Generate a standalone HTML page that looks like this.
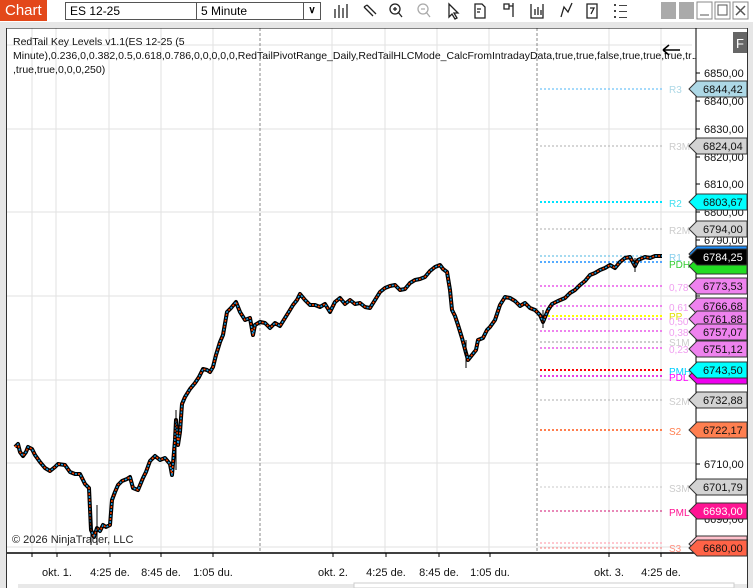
<!DOCTYPE html>
<html><head><meta charset="utf-8">
<style>
*{margin:0;padding:0;box-sizing:border-box}
body{width:753px;height:588px;overflow:hidden;background:#fff;font-family:"Liberation Sans",sans-serif;position:relative}
.tb{position:absolute;left:0;top:0;width:753px;height:22px;background:#fff}
.chart{position:absolute;left:0;top:0;width:47px;height:21px;background:#e3481a;color:#fff;font-size:15px;line-height:21px;padding-left:5px}
.combo{position:absolute;top:2px;height:18px;border:1px solid #555;background:#fff;font-size:12px;line-height:16px;padding-left:4px}
.combo span{position:absolute;right:0;top:0;width:17px;height:16px;border-left:1px solid #555;text-align:center;font-size:10px;font-weight:bold}
.strip{position:absolute;left:0;top:22px;width:753px;height:6px;background:#e6e6e6}
</style></head><body>
<div class="tb"></div>
<div class="chart">Chart</div>
<div class="combo" style="left:65px;width:152px">ES 12-25<span>∨</span></div>
<div class="combo" style="left:196px;width:125px">5 Minute<span>∨</span></div>
<svg style="position:absolute;left:0;top:0" width="753" height="22">
<g stroke="#222" fill="none" stroke-width="1.3">
<path d="M335 9v9M339 5v13M343 8v10M347 4v14"/>
<path d="M364 7l9 9M367 5l9 9M364 7l3-2"/>
<circle cx="395" cy="9" r="5"/><path d="M398 12l4 5M393 9h4M395 7v4"/>
<g stroke="#aaa"><circle cx="423" cy="9" r="5"/><path d="M426 12l4 5M421 9h4"/></g>
<path d="M449 4v13l3-3 3 5 2-1-3-5h4z"/>
<path d="M475 4h7l3 3v11h-10zM477 9h4M477 12h3"/>
<path d="M504 4h5v5h-5zM509 6h4M513 3v14"/>
<path d="M531 4v14h12v-14M535 9v6M538 7v8M541 10v5"/>
<path d="M561 17l3-10 4 5 4-9"/>
<path d="M587 4h10v14h-10zM590 8h4l-3 6"/>
</g>
<g fill="#444"><rect x="614" y="4" width="2" height="2"/><rect x="614" y="10" width="2" height="2"/><rect x="614" y="16" width="2" height="2"/><rect x="619" y="5" width="8" height="1"/><rect x="619" y="11" width="8" height="1"/><rect x="619" y="17" width="8" height="1"/></g>
<rect x="661" y="2" width="15" height="17" fill="#aaa"/><rect x="679" y="2" width="15" height="17" fill="#aaa"/>
<rect x="697" y="2" width="15" height="17" fill="#fff" stroke="#888"/><path d="M700 15h9" stroke="#555"/>
<rect x="715" y="2" width="15" height="17" fill="#fff" stroke="#888"/><rect x="718" y="5" width="9" height="10" fill="none" stroke="#555"/>
<rect x="733" y="2" width="15" height="17" fill="#fff" stroke="#888"/><path d="M736 6l9 9M745 6l-9 9" stroke="#555" stroke-width="1.5"/>
</svg>
<div class="strip"></div>
<svg style="position:absolute;left:0;top:28px" width="753" height="560" viewBox="0 28 753 560" font-family="Liberation Sans, sans-serif">
<defs>
<polyline id="p" points="15,447 18,444 20,452 23,456 26,452 28,447 32,449 35,455 40,462 45,468 50,471 55,467 58,464 65,465 70,472 75,474 80,474 85,484 89,488 91,530 94,537 97,528 100,531 103,525 106,527 110,525 112,500 115,492 118,485 122,481 127,479 130,477 133,488 138,490 143,478 146,472 150,461 155,456 160,460 165,458 170,464 172,475 175,440 176,420 178,445 180,432 182,404 185,397 190,389 195,383 199,377 203,369 207,370 210,372 213,367 216,355 220,342 223,335 227,312 231,308 236,302 240,312 245,320 250,318 253,335 255,325 260,322 265,323 270,328 275,323 280,326 285,318 290,310 293,305 297,300 300,294 305,300 310,305 315,305 320,307 325,304 330,312 335,302 340,298 345,304 350,300 355,304 360,303 365,307 370,308 375,300 380,292 385,288 390,286 395,285 400,290 405,289 410,283 415,280 420,279 425,277 430,271 435,267 440,265 443,269 447,272 450,290 452,310 455,316 458,325 462,338 466,353 468,360 472,355 476,350 478,340 483,338 487,330 490,327 495,320 500,305 505,297 510,298 515,301 520,306 525,303 530,308 535,310 540,315 543,322 548,310 552,304 558,301 565,298 570,293 575,290 580,285 585,281 590,275 595,273 600,270 605,268 610,265 615,268 620,262 625,258 630,257 635,266 638,260 645,257 650,258 655,256 662,256"/>
</defs>
<rect x="0" y="28" width="6" height="560" fill="#e6e6e6"/>
<rect x="748" y="28" width="5" height="560" fill="#e6e6e6"/>
<rect x="6" y="28" width="742" height="560" fill="#fff"/>
<g stroke="#e2e2e2" stroke-width="1">
<path d="M32 28v525M56 28v525M109 28v525M161 28v525M213 28v525M332 28v525M385 28v525M437 28v525M489 28v525M609 28v525M661 28v525"/>
<path d="M7 45h689M7 129h689M7 212h689M7 296h689M7 380h689M7 463h689M7 547h689"/>
</g>
<g stroke="#888" stroke-dasharray="3,2"><path d="M260 28v525M537 28v525"/></g>
<g stroke-dasharray="2,2" stroke-width="1.5">
<path d="M540 89h122" stroke="#87cefa"/>
<path d="M540 146h122" stroke="#c8c8c8"/>
<path d="M540 202h122" stroke="#00e5ff" stroke-width="2"/>
<path d="M540 229h122" stroke="#c8c8c8"/>
<path d="M540 256h122" stroke="#87ceeb"/>
<path d="M540 262h122" stroke="#1e90ff"/>
<path d="M540 286h122" stroke="#ee82ee" stroke-width="2"/>
<path d="M540 306h122" stroke="#ee82ee" stroke-width="2"/>
<path d="M540 316h122" stroke="#ffff00" stroke-width="2"/>
<path d="M540 319h122" stroke="#ee82ee" stroke-width="2"/>
<path d="M540 331h122" stroke="#ee82ee" stroke-width="2"/>
<path d="M540 342h122" stroke="#cccccc" stroke-width="2"/>
<path d="M540 348h122" stroke="#ee82ee" stroke-width="2"/>
<path d="M540 370h122" stroke="#ff0000" stroke-width="2"/>
<path d="M540 376h122" stroke="#dd00dd"/>
<path d="M540 400h122" stroke="#c8c8c8"/>
<path d="M540 430h122" stroke="#ff7f50" stroke-width="2"/>
<path d="M540 487h122" stroke="#c8c8c8" stroke-width="1"/>
<path d="M540 511h122" stroke="#d01070" stroke-width="1"/>
<path d="M540 543h122" stroke="#ffb6c1"/>
<path d="M540 548h122" stroke="#ff7f7f" stroke-width="1"/>
</g>
<g font-size="10">
<text x="669" y="93" fill="#add8e6">R3</text>
<text x="669" y="150" fill="#ccc">R3M</text>
<text x="669" y="207" fill="#40e0f0">R2</text>
<text x="669" y="234" fill="#ccc">R2M</text>
<text x="669" y="261" fill="#87ceeb">R1</text>
<text x="669" y="268" fill="#32cd32">PDH</text>
<text x="669" y="291" fill="#f0a0f0">0,78</text>
<text x="669" y="311" fill="#f0a0f0">0,61</text>
<text x="669" y="320" fill="#e0e000">PP</text>
<text x="669" y="325" fill="#f0a0f0">0,50</text>
<text x="669" y="336" fill="#f0a0f0">0,38</text>
<text x="669" y="346" fill="#ccc">S1M</text>
<text x="669" y="353" fill="#f0a0f0">0,23</text>
<text x="669" y="375" fill="#00d0ff">PMH</text>
<text x="669" y="381" fill="#ff00ff">PDL</text>
<text x="669" y="405" fill="#ccc">S2M</text>
<text x="669" y="435" fill="#ff7f50">S2</text>
<text x="669" y="492" fill="#ccc">S3M</text>
<text x="669" y="516" fill="#ff1493">PML</text>
<text x="669" y="552" fill="#ff9080">S3</text>
</g>
<g fill="none" stroke-linejoin="round">
<use href="#p" stroke="#000" stroke-width="4"/>
<use href="#p" stroke="#ff4500" stroke-width="1.5" stroke-dasharray="2,4"/>
<use href="#p" stroke="#1e9be0" stroke-width="1.5" stroke-dasharray="2,4" stroke-dashoffset="3"/>
</g>
<path d="M91 500v45M97 505v40M176 410v60M466 340v28M543 310v18M635 258v14" stroke="#000" stroke-width="1"/>
<g font-size="10.5" fill="#111">
<text x="13" y="45">RedTail Key Levels v1.1(ES 12-25 (5</text>
<text x="13" y="59">Minute),0.236,0,0.382,0.5,0.618,0.786,0,0,0,0,0,RedTailPivotRange_Daily,RedTailHLCMode_CalcFromIntradayData,true,true,false,true,true,true,true,true</text>
<text x="13" y="73">,true,true,0,0,0,250)</text>
</g>
<rect x="692" y="28" width="56" height="30" fill="#fff"/>
<path d="M663 50h17M663 50l6-5M663 50l6 5" stroke="#000" stroke-width="1.5" fill="none"/>
<text x="12" y="543" font-size="11" fill="#222">© 2026 NinjaTrader, LLC</text>
<rect x="696" y="28" width="52" height="525" fill="#fff"/>
<path d="M696 28v525" stroke="#000"/>
<path d="M6 553h742" stroke="#000" stroke-width="1.5"/>
<path d="M6 28h742" stroke="#000"/>
<path d="M6.5 28v560M747.5 28v560" stroke="#333"/>
<g stroke="#000"><path d="M696 73h4M696 101h4M696 129h4M696 157h4M696 184h4M696 212h4M696 240h4M696 268h4M696 296h4M696 324h4M696 352h4M696 380h4M696 408h4M696 436h4M696 464h4M696 491h4M696 519h4"/>
<path d="M32 553v4M57 553v4M110 553v4M161 553v4M213 553v4M333 553v4M386 553v4M439 553v4M490 553v4M609 553v4M661 553v4"/></g>
<g font-size="11" fill="#111">
<text x="704" y="77">6850,00</text><text x="704" y="105">6840,00</text><text x="704" y="133">6830,00</text><text x="704" y="161">6820,00</text><text x="704" y="188">6810,00</text><text x="704" y="216">6800,00</text><text x="704" y="244">6790,00</text><text x="704" y="468">6710,00</text><text x="704" y="523">6690,00</text>
</g>
<rect x="733" y="32" width="14" height="21" fill="#666"/><text x="736" y="48" font-size="13" fill="#fff">F</text>
<g font-size="11" stroke="#333" stroke-width="1">
<g><polygon points="689,89 697,81 747,81 747,97 697,97" fill="#add8e6"/><text x="703" y="93" stroke="none" fill="#111">6844,42</text></g>
<g><polygon points="689,146 697,138 747,138 747,154 697,154" fill="#d3d3d3"/><text x="703" y="150" stroke="none" fill="#111">6824,04</text></g>
<g><polygon points="689,202 697,194 747,194 747,210 697,210" fill="#00ffff"/><text x="703" y="206" stroke="none" fill="#111">6803,67</text></g>
<g><polygon points="689,229 697,221 747,221 747,237 697,237" fill="#d3d3d3"/><text x="703" y="233" stroke="none" fill="#111">6794,00</text></g>
<polygon points="689,266 697,258 747,258 747,274 697,274" fill="#22dd22"/>
<polygon points="689,254 697,246 747,246 747,262 697,262" fill="#1e90ff"/>
<g><polygon points="689,257 697,249 747,249 747,265 697,265" fill="#000"/><text x="703" y="261" stroke="none" fill="#fff">6784,25</text></g>
<g><polygon points="689,286 697,278 747,278 747,294 697,294" fill="#ee82ee"/><text x="703" y="290" stroke="none" fill="#111">6773,53</text></g>
<g><polygon points="689,306 697,298 747,298 747,314 697,314" fill="#ee82ee"/><text x="703" y="310" stroke="none" fill="#111">6766,68</text></g>
<g><polygon points="689,319 697,311 747,311 747,327 697,327" fill="#ee82ee"/><text x="703" y="323" stroke="none" fill="#111">6761,88</text></g>
<g><polygon points="689,332 697,324 747,324 747,340 697,340" fill="#ee82ee"/><text x="703" y="336" stroke="none" fill="#111">6757,07</text></g>
<g><polygon points="689,349 697,341 747,341 747,357 697,357" fill="#ee82ee"/><text x="703" y="353" stroke="none" fill="#111">6751,12</text></g>
<polygon points="689,376 697,368 747,368 747,384 697,384" fill="#ee00ee"/>
<g><polygon points="689,370 697,362 747,362 747,378 697,378" fill="#00ffff"/><text x="703" y="374" stroke="none" fill="#111">6743,50</text></g>
<g><polygon points="689,400 697,392 747,392 747,408 697,408" fill="#d3d3d3"/><text x="703" y="404" stroke="none" fill="#111">6732,88</text></g>
<g><polygon points="689,430 697,422 747,422 747,438 697,438" fill="#ff7f50"/><text x="703" y="434" stroke="none" fill="#111">6722,17</text></g>
<g><polygon points="689,487 697,479 747,479 747,495 697,495" fill="#d3d3d3"/><text x="703" y="491" stroke="none" fill="#111">6701,79</text></g>
<g><polygon points="689,511 697,503 747,503 747,519 697,519" fill="#ff1493"/><text x="703" y="515" stroke="none" fill="#fff">6693,00</text></g>
<polygon points="689,544 697,536 747,536 747,552 697,552" fill="#ffc0cb"/>
<g><polygon points="689,548 697,540 747,540 747,556 697,556" fill="#ff6347"/><text x="703" y="552" stroke="none" fill="#111">6680,00</text></g>
</g>
<g font-size="11" fill="#111" text-anchor="middle">
<text x="57" y="576">okt. 1.</text><text x="110" y="576">4:25 de.</text><text x="161" y="576">8:45 de.</text><text x="213" y="576">1:05 du.</text>
<text x="333" y="576">okt. 2.</text><text x="386" y="576">4:25 de.</text><text x="439" y="576">8:45 de.</text><text x="490" y="576">1:05 du.</text>
<text x="609" y="576">okt. 3.</text><text x="661" y="576">4:25 de.</text>
</g>
<rect x="18" y="584" width="729" height="4" fill="#e8e8e8"/>
<rect x="354" y="583" width="380" height="5" fill="#fff" stroke="#ccc"/>
</svg>
</body></html>
